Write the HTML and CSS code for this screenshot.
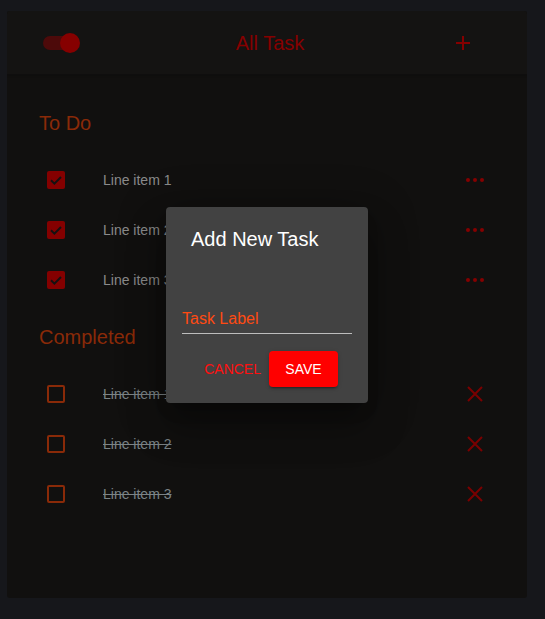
FILE: index.html
```html
<!DOCTYPE html>
<html lang="en">
<head>
<meta charset="utf-8">
<title>All Task</title>
<link rel="stylesheet" href="styles.css">
</head>
<body>
<div class="card">
  <header class="appbar">
    <div class="switch"><span class="track"></span><span class="thumb"></span></div>
    <h1 class="title">All Task</h1>
    <svg class="plus" width="24" height="24" viewBox="0 0 24 24"><path d="M5 12h14M12 5v14" stroke="#850000" stroke-width="2" fill="none"/></svg>
  </header>

  <section class="section first">
    <h2 class="heading">To Do</h2>
    <ul class="list">
      <li class="row">
        <svg class="cb" width="18" height="18" viewBox="0 0 18 18"><rect width="18" height="18" rx="2" fill="#840000"/><path d="M4 9.2l3.4 3.4L14 6" stroke="#151111" stroke-width="2" fill="none"/></svg>
        <span class="label">Line item 1</span>
        <span class="dots"><i></i><i></i><i></i></span>
      </li>
      <li class="row">
        <svg class="cb" width="18" height="18" viewBox="0 0 18 18"><rect width="18" height="18" rx="2" fill="#840000"/><path d="M4 9.2l3.4 3.4L14 6" stroke="#151111" stroke-width="2" fill="none"/></svg>
        <span class="label">Line item 2</span>
        <span class="dots"><i></i><i></i><i></i></span>
      </li>
      <li class="row">
        <svg class="cb" width="18" height="18" viewBox="0 0 18 18"><rect width="18" height="18" rx="2" fill="#840000"/><path d="M4 9.2l3.4 3.4L14 6" stroke="#151111" stroke-width="2" fill="none"/></svg>
        <span class="label">Line item 3</span>
        <span class="dots"><i></i><i></i><i></i></span>
      </li>
    </ul>
  </section>

  <section class="section">
    <h2 class="heading">Completed</h2>
    <ul class="list">
      <li class="row">
        <span class="cb-empty"></span>
        <span class="label done">Line item 1</span>
        <svg class="close" width="24" height="24" viewBox="0 0 24 24"><path d="M5 5l14 14M19 5L5 19" stroke="#7a0000" stroke-width="2" fill="none"/></svg>
      </li>
      <li class="row">
        <span class="cb-empty"></span>
        <span class="label done">Line item 2</span>
        <svg class="close" width="24" height="24" viewBox="0 0 24 24"><path d="M5 5l14 14M19 5L5 19" stroke="#7a0000" stroke-width="2" fill="none"/></svg>
      </li>
      <li class="row">
        <span class="cb-empty"></span>
        <span class="label done">Line item 3</span>
        <svg class="close" width="24" height="24" viewBox="0 0 24 24"><path d="M5 5l14 14M19 5L5 19" stroke="#7a0000" stroke-width="2" fill="none"/></svg>
      </li>
    </ul>
  </section>

  <div class="overlay">
    <div class="dialog">
      <h3 class="dialog-title">Add New Task</h3>
      <div class="dialog-content">
        <div class="field">Task Label</div>
      </div>
      <div class="actions">
        <button class="btn-text">CANCEL</button>
        <button class="btn-save">SAVE</button>
      </div>
    </div>
  </div>
</div>
</body>
</html>
```

FILE: styles.css
```css
* { box-sizing: border-box; }
html, body { margin: 0; padding: 0; }
body {
  background: #16171b;
  width: 545px;
  height: 619px;
  overflow: hidden;
  font-family: "Liberation Sans", Arial, sans-serif;
}
.card {
  position: relative;
  margin: 11px 0 0 7px;
  width: 520px;
  height: 587px;
  background: #11100f;
  border-radius: 3px;
  overflow: hidden;
}
.appbar {
  height: 64px;
  display: grid;
  grid-template-columns: 1fr auto 1fr;
  align-items: center;
  padding: 0 36px;
  background: #141312;
  box-shadow: 0 1px 2px rgba(0,0,0,0.18);
  border-bottom: 1px solid #0f0e0e;
}
.switch {
  position: relative;
  width: 37px;
  height: 20px;
  display: flex;
  align-items: center;
}
.track {
  display: block;
  width: 32px;
  height: 14px;
  border-radius: 7px;
  background: #4d0a0a;
}
.thumb {
  position: absolute;
  right: 0;
  top: 0;
  width: 20px;
  height: 20px;
  border-radius: 50%;
  background: #860000;
}
.title {
  margin: 0;
  padding-left: 6px;
  font-size: 20px;
  font-weight: 400;
  color: #860000;
  line-height: 24px;
}
.plus {
  justify-self: end;
  margin-right: 16px;
  display: block;
}
.section { padding-top: 20px; }
.section.first { padding-top: 36px; }
.heading {
  margin: 0 0 20px 32px;
  font-size: 20px;
  font-weight: 400;
  line-height: 24px;
  color: #8a2a08;
}
.list { list-style: none; margin: 0; padding: 0; }
.row {
  height: 50px;
  display: flex;
  align-items: center;
  padding: 0 40px;
}
.cb { display: block; flex: none; }
.cb-empty {
  flex: none;
  width: 18px;
  height: 18px;
  border: 2px solid #8a2a08;
  border-radius: 2px;
}
.label {
  flex: 1;
  margin-left: 38px;
  font-size: 14px;
  color: #8a8a8a;
}
.label.done {
  color: #7b8386;
  text-decoration: line-through;
}
.dots {
  width: 24px;
  display: flex;
  justify-content: center;
  gap: 3px;
}
.dots i {
  display: block;
  width: 4px;
  height: 4px;
  border-radius: 50%;
  background: #850000;
}
.close { display: block; flex: none; }
.overlay {
  position: absolute;
  inset: 0;
  display: flex;
  align-items: center;
  justify-content: center;
}
.dialog {
  width: 202px;
  height: 196px;
  background: #424242;
  border-radius: 4px;
  box-shadow: 0 11px 15px -7px rgba(0,0,0,0.3), 0 24px 38px 3px rgba(0,0,0,0.22), 0 9px 46px 8px rgba(0,0,0,0.2);
  display: flex;
  flex-direction: column;
}
.dialog-title {
  margin: 0;
  padding: 16px 24px 0 25px;
  height: 48px;
  font-size: 20px;
  font-weight: 400;
  line-height: 32px;
  color: #ffffff;
}
.dialog-content { padding: 50px 16px 0; }
.field {
  padding: 4px 0 5px;
  line-height: 19px;
  font-size: 16px;
  color: #ff4a12;
  border-bottom: 1px solid #bdbdbd;
}
.actions {
  display: flex;
  justify-content: flex-end;
  align-items: center;
  gap: 8px;
  padding: 17px 30px 16px 16px;
}
.btn-text, .btn-save {
  font-family: "Liberation Sans", Arial, sans-serif;
  font-size: 14px;
  border: 0;
  cursor: pointer;
}
.btn-text {
  background: transparent;
  color: #ff1010;
  padding: 0;
  height: 36px;
}
.btn-save {
  background: #ff0000;
  color: #ffffff;
  width: 69px;
  height: 36px;
  border-radius: 4px;
  padding: 0;
  box-shadow: 0 3px 1px -2px rgba(0,0,0,0.2), 0 2px 2px rgba(0,0,0,0.14), 0 1px 5px rgba(0,0,0,0.12);
}
```
